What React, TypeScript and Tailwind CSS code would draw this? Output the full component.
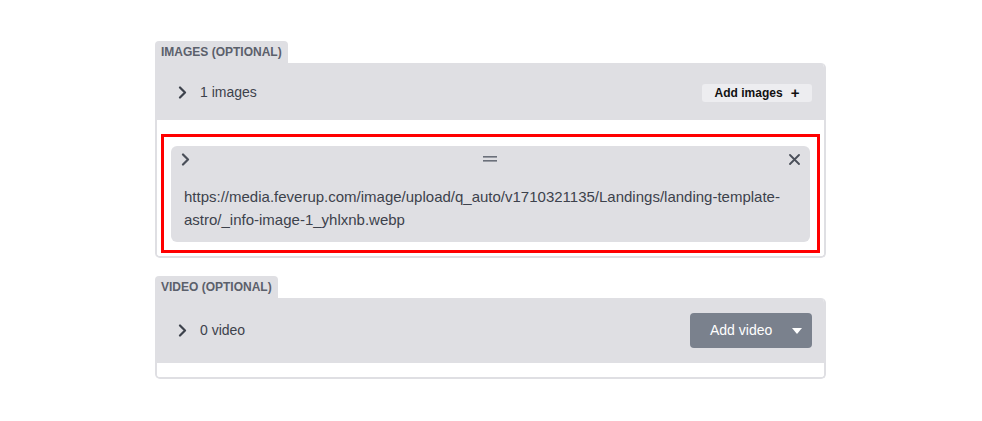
import React from 'react'

const Chevron = ({ className = '' }: { className?: string }) => (
	<svg width="9" height="13" viewBox="0 0 9 13" className={className}>
		<path d="M2 1.5 L7 6.5 L2 11.5" fill="none" stroke="currentColor" strokeWidth="2.2" strokeLinecap="round" strokeLinejoin="round" />
	</svg>
)

const Tab = ({ label }: { label: string }) => (
	<div className="flex w-fit items-center h-[22px] px-[6px] bg-[#dfdfe3] rounded-t-[4px] text-[12px] font-bold text-[#5b606b]">
		{label}
	</div>
)

const ImagesSection = () => (
	<div>
		<Tab label="IMAGES (OPTIONAL)" />
		<div className="border-2 border-t-0 border-[#dfdfe3] rounded-b-[5px] rounded-tr-[5px] overflow-hidden">
			<div className="bg-[#dfdfe3] h-[57px] flex items-center pt-[2px] pl-[21px] pr-[12px]">
				<Chevron className="text-[#3d424c]" />
				<span className="ml-[13px] text-[14px] text-[#3d424c]">1 images</span>
				<button className="ml-auto h-[18px] w-[110px] flex items-center justify-center gap-[8px] bg-[#ededf0] rounded-[3px] text-[12px] font-bold text-[#111]">
					Add images
					<span className="text-[15px] leading-none font-bold">+</span>
				</button>
			</div>
			<div className="bg-white pt-[14px] pb-[3px] px-[4px]">
				<div className="border-[3px] border-[#ff0000] px-[7px] pt-[9px] pb-[8px]">
					<div className="bg-[#dfdfe3] rounded-[6px] pb-[11px]">
						<div className="h-[26px] flex items-center justify-between px-[10px]">
							<Chevron className="text-[#4a4f59]" />
							<svg width="14" height="6" viewBox="0 0 14 6">
								<rect x="0" y="0" width="14" height="1.6" fill="#6b707a" />
								<rect x="0" y="4" width="14" height="1.6" fill="#6b707a" />
							</svg>
							<svg width="11" height="11" viewBox="0 0 11 11">
								<path d="M1 1 L10 10 M10 1 L1 10" stroke="#4a4f59" strokeWidth="1.8" strokeLinecap="round" />
							</svg>
						</div>
						<div className="px-[13px] pt-[13px] text-[15px] leading-[23px] text-[#3d424c] break-words">
							https://media.feverup.com/image/upload/q_auto/v1710321135/Landings/landing-template-astro/_info-image-1_yhlxnb.webp
						</div>
					</div>
				</div>
			</div>
		</div>
	</div>
)

const VideoSection = () => (
	<div className="mt-[18px]">
		<Tab label="VIDEO (OPTIONAL)" />
		<div className="border-2 border-t-0 border-[#dfdfe3] rounded-b-[5px] rounded-tr-[5px] overflow-hidden">
			<div className="bg-[#dfdfe3] h-[65px] flex items-center pl-[21px] pr-[12px]">
				<Chevron className="text-[#3d424c]" />
				<span className="ml-[13px] text-[14px] text-[#3d424c]">0 video</span>
				<button className="ml-auto h-[35px] w-[122px] flex items-center pl-[20px] pr-[10px] bg-[#7a818d] rounded-[4px] text-[14px] text-white">
					Add video
					<svg width="10" height="6" viewBox="0 0 10 6" className="ml-auto">
						<path d="M0 0 L10 0 L5 6 Z" fill="white" />
					</svg>
				</button>
			</div>
			<div className="bg-white h-[14px]" />
		</div>
	</div>
)

const App = () => {
	return (
		<div className="w-[982px] h-[421px] bg-white pt-[41px] pl-[155px]" style={{ fontFamily: '"Liberation Sans", Arial, sans-serif' }}>
			<div className="w-[671px]">
				<ImagesSection />
				<VideoSection />
			</div>
		</div>
	)
}

export default App
